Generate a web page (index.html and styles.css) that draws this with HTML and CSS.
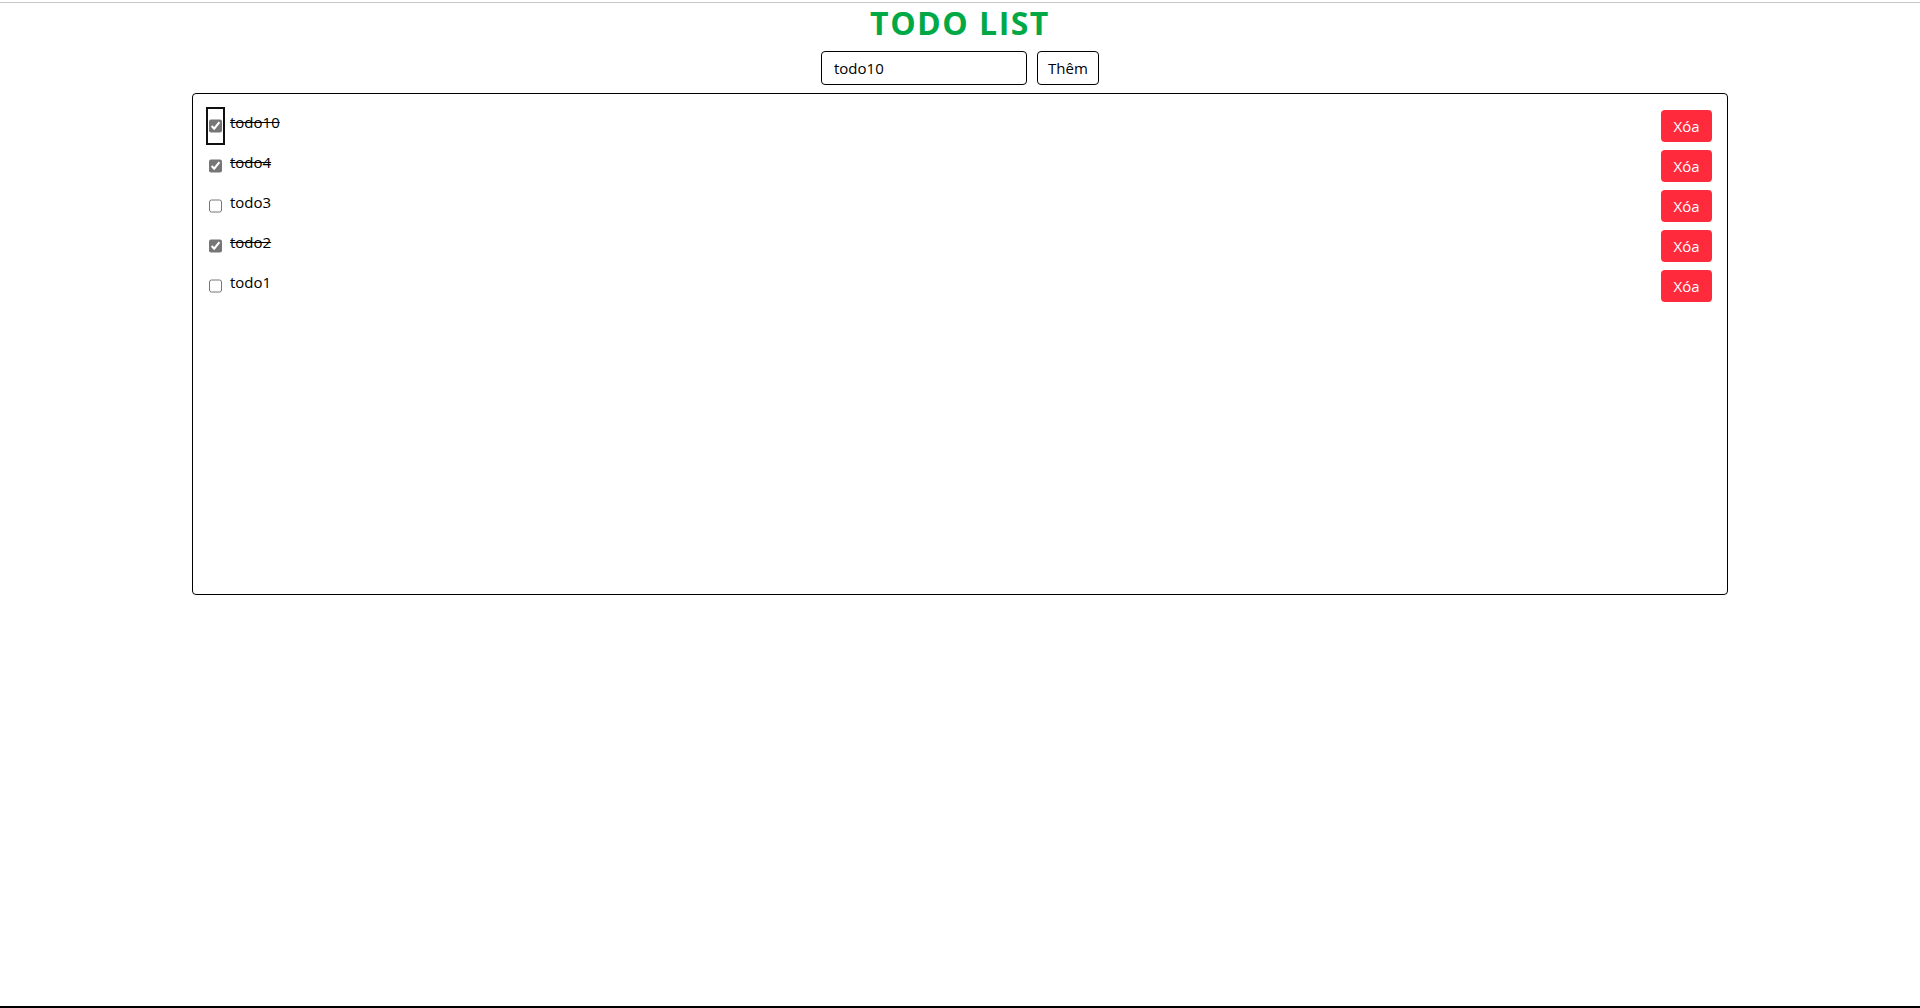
FILE: index.html
```html
<!DOCTYPE html>
<html lang="vi">
<head>
<meta charset="utf-8">
<title>Todo List</title>
<link rel="stylesheet" href="styles.css">
</head>
<body>
<div class="page">
  <div class="topline"></div>
  <main class="app">
    <h1 class="title">TODO LIST</h1>
    <form class="add-form">
      <input class="add-input" type="text" value="todo10">
      <button class="add-btn" type="button">Thêm</button>
    </form>
    <ul class="todo-list">
      <li class="todo-item done">
        <input class="todo-check is-focused" type="checkbox" checked>
        <span class="todo-text">todo10</span>
        <button class="del-btn" type="button">Xóa</button>
      </li>
      <li class="todo-item done">
        <input class="todo-check" type="checkbox" checked>
        <span class="todo-text">todo4</span>
        <button class="del-btn" type="button">Xóa</button>
      </li>
      <li class="todo-item">
        <input class="todo-check" type="checkbox">
        <span class="todo-text">todo3</span>
        <button class="del-btn" type="button">Xóa</button>
      </li>
      <li class="todo-item done">
        <input class="todo-check" type="checkbox" checked>
        <span class="todo-text">todo2</span>
        <button class="del-btn" type="button">Xóa</button>
      </li>
      <li class="todo-item">
        <input class="todo-check" type="checkbox">
        <span class="todo-text">todo1</span>
        <button class="del-btn" type="button">Xóa</button>
      </li>
    </ul>
  </main>
  <div class="bottombar"></div>
</div>
</body>
</html>
```

FILE: styles.css
```css
* { box-sizing: border-box; }

html, body {
  margin: 0;
  padding: 0;
  background: #ffffff;
}

body {
  font-family: "Open Sans", "Noto Sans", "Liberation Sans", sans-serif;
  font-size: 16px;
  color: #000;
}

.page {
  height: 1008px;
  display: flex;
  flex-direction: column;
  overflow: hidden;
}

.topline {
  margin-top: 2px;
  height: 1px;
  background: #c6c6c6;
  flex: none;
}

.app {
  flex: 1;
  display: flex;
  flex-direction: column;
  align-items: center;
}

.title {
  margin: 2px 0 0 0;
  font-size: 32px;
  line-height: 36px;
  font-weight: 700;
  color: #00a846;
  letter-spacing: 1.5px;
}

.add-form {
  margin-top: 10px;
  display: flex;
  gap: 10px;
  justify-content: center;
}

.add-input {
  width: 206px;
  height: 34px;
  border: 1px solid #000;
  border-radius: 4px;
  padding: 0 12px;
  font-family: inherit;
  font-size: 15px;
  color: #000;
  outline: none;
}

.add-btn {
  height: 34px;
  width: 62px;
  padding: 0;
  border: 1px solid #000;
  border-radius: 4px;
  background: #fff;
  font-family: inherit;
  font-size: 15px;
  color: #000;
}

.todo-list {
  list-style: none;
  margin: 8px 0 0 0;
  width: 80%;
  height: 502px;
  border: 1px solid #000;
  border-radius: 4px;
  padding: 16px 15px 16px 16px;
}

.todo-item {
  display: flex;
  align-items: stretch;
  margin-bottom: 8px;
}

.todo-check {
  margin: 0;
  width: 13px;
  accent-color: #767676;
  flex: none;
}

.todo-check.is-focused {
  outline: 2px solid #101010;
  outline-offset: 1px;
  border-radius: 4px;
}

.todo-text {
  flex: 1;
  margin-left: 8px;
  font-size: 15px;
  line-height: 25px;
}

.todo-item.done .todo-text {
  text-decoration: line-through;
}

.del-btn {
  width: 51px;
  height: 32px;
  border: none;
  border-radius: 4px;
  background: #ff2a3b;
  color: #fff;
  font-family: inherit;
  font-size: 15px;
  padding: 0;
  flex: none;
}

.bottombar {
  flex: none;
  height: 2px;
  background: #000;
}
```
